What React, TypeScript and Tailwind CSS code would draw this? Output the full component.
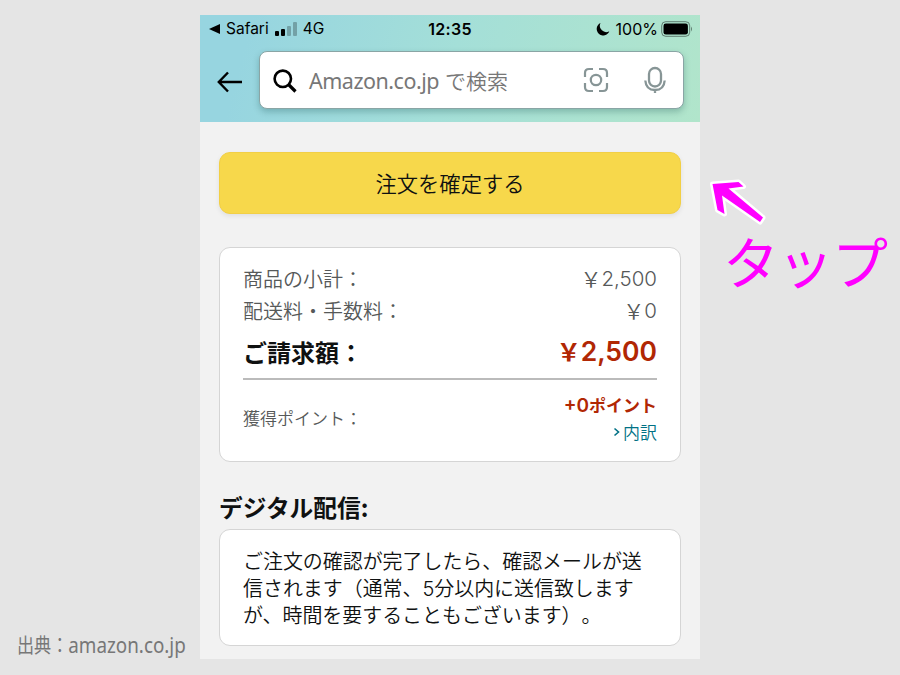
import type { ReactNode } from "react"

interface PriceRowProps {
  label: string
  amount: string
}

const PriceRow = ({ label, amount }: PriceRowProps) => (
  <div className="flex h-8 items-center justify-between text-[20px] font-[350] text-[#565959]">
    <span>{label}</span>
    <span className="flex items-center">
      <span className="text-[21px]">￥</span>
      <span className="font-['Inter'] text-[20.5px] font-[350]">{amount}</span>
    </span>
  </div>
)

const Card = ({ className, children }: { className: string; children: ReactNode }) => (
  <section className={`rounded-[11px] border border-[#d5d5d5] bg-white px-[23px] ${className}`}>
    {children}
  </section>
)

const StatusBar = () => (
  <div className="grid h-[28px] grid-cols-3 items-center px-2 font-['Inter'] text-[16px] text-black">
    <div className="flex items-center">
      <svg width="12" height="12" viewBox="0 0 12 12">
        <path d="M1 6L12 1V11Z" />
      </svg>
      <span className="ml-[6px] text-[15.5px]">Safari</span>
      <svg className="ml-[6px]" width="23" height="14" viewBox="0 0 23 14">
        <rect x="0" y="9" width="4" height="5" rx="1" />
        <rect x="6" y="7" width="4" height="7" rx="1" />
        <rect x="12" y="4" width="4" height="10" rx="1" opacity=".25" />
        <rect x="18" y="0" width="4" height="14" rx="1" opacity=".25" />
      </svg>
      <span className="ml-[5px] text-[15.5px]">4G</span>
    </div>
    <div className="text-center font-semibold tracking-[0.3px]">12:35</div>
    <div className="-mr-[1px] flex items-center justify-end">
      <svg width="14" height="14" viewBox="0 0 14 14">
        <path d="M4.5 1A6.5 6.5 0 1 0 13.3 9.2A6.3 6.3 0 0 1 4.5 1Z" />
      </svg>
      <span className="ml-[6px]">100%</span>
      <svg className="ml-[3px]" width="32" height="16" viewBox="0 0 32 16">
        <rect x=".7" y=".7" width="28" height="14.6" rx="4" fill="none" stroke="#000" strokeOpacity=".45" />
        <rect x="2.5" y="2.5" width="24.4" height="11" rx="2.3" />
        <path d="M30 5.5Q32 8 30 10.5Z" opacity=".45" />
      </svg>
    </div>
  </div>
)

const SearchHeader = () => (
  <div className="flex items-center pt-[8px] pr-[16px] pl-[17px]">
    <svg className="mt-[3px]" width="26" height="22" viewBox="0 0 26 22" fill="none" stroke="#000" strokeWidth="2.4">
      <path d="M25 11H1.8M11 1.5L1.8 11L11 20.5" />
    </svg>
    <div className="ml-4 flex h-[58px] flex-1 items-center rounded-lg border border-[#8aa5a5] bg-white pr-[17px] pl-[13px] shadow-[0_3px_6px_rgba(0,60,60,0.25)]">
      <svg className="mt-[2px]" width="24" height="24" viewBox="0 0 24 24" fill="none" stroke="#000" strokeWidth="2.6">
        <circle cx="9.8" cy="9.8" r="8.2" />
        <path d="M15.5 15.5L22.5 22.5" strokeWidth="3.2" />
      </svg>
      <span className="mt-[3px] ml-[12px] flex-1 whitespace-nowrap text-[21px] font-[350] text-[#777]">
        <span className="mr-[6px] font-['Noto_Sans'] text-[21.5px] font-normal tracking-[-0.5px]">Amazon.co.jp</span>
        で検索
      </span>
      <svg width="26" height="26" viewBox="0 0 26 26" fill="none" stroke="#879596" strokeWidth="2.2">
        <path d="M10 2H6Q2 2 2 6V10M16 2H20Q24 2 24 6V10M2 16V20Q2 24 6 24H10M24 16V20Q24 24 20 24H16" />
        <circle cx="13" cy="13" r="5.2" />
      </svg>
      <svg className="ml-[35px]" width="22" height="28" viewBox="0 0 22 28" fill="none" stroke="#879596" strokeWidth="2.3">
        <rect x="5" y="2" width="12" height="18.500" rx="6" />
        <path d="M1.3 14.5Q2 24 11 24Q20 24 20.7 14.5M11 24V27" />
      </svg>
    </div>
  </div>
)

export default function App() {
  return (
    <div className="grid h-[675px] w-[900px] grid-cols-[200px_500px_200px] overflow-hidden bg-[#e5e5e5] font-['Noto_Sans_CJK_JP',sans-serif]">
      <aside className="flex items-end pb-[15px] pl-[17px]">
        <p className="origin-left scale-x-[0.855] whitespace-nowrap text-[20px] leading-[30px] text-[#777]">
          出典：<span className="font-['Noto_Sans'] text-[22px]">amazon.co.jp</span>
        </p>
      </aside>

      <main className="mt-[15px] h-[644px] bg-[#f2f2f2]">
        <header className="h-[107px] bg-linear-[105deg] from-[#97d5e0] from-10% via-[#a4dfd8] via-50% to-[#b1e5cb]">
          <StatusBar />
          <SearchHeader />
        </header>

        <div className="px-[19px] pt-[30px]">
          <button className="block h-[62px] w-full rounded-[11px] border border-[#f2cf45] bg-[#f7d84b] pb-[1px] text-[21.3px] font-[350] text-[#0f1111] shadow-[0_2px_5px_rgba(0,0,0,0.08)]">
            注文を確定する
          </button>

          <Card className="mt-[33px] h-[215px] pt-[15px]">
            <PriceRow label="商品の小計：" amount="2,500" />
            <PriceRow label="配送料・手数料：" amount="0" />
            <div className="flex h-[53px] items-center justify-between border-b-2 border-[#bbb] pb-[2px] text-2xl font-bold">
              <span className="text-[#0f1111]">ご請求額：</span>
              <span className="flex items-center text-[#b12704]">
                <span>￥</span>
                <span className="font-['Inter'] text-[26.5px] font-semibold">2,500</span>
              </span>
            </div>
            <div className="flex h-[76px] items-center justify-between text-[17px]">
              <span className="font-[350] text-[#565959]">獲得ポイント：</span>
              <div className="flex flex-col items-end leading-[27px]">
                <span className="font-bold text-[#b12704]">
                  <span className="font-['Inter'] text-[19px] leading-none font-semibold">+0</span>ポイント
                </span>
                <span className="flex items-center font-[350] text-[#007185]">
                  <svg className="mr-[3px]" width="7" height="10" viewBox="0 0 7 10" fill="none" stroke="#007185" strokeWidth="1.6">
                    <path d="M1.5 1.5L5.5 5L1.5 8.5" />
                  </svg>
                  内訳
                </span>
              </div>
            </div>
          </Card>

          <h2 className="mt-[27px] h-[40px] text-[23.7px] leading-[36px] font-bold text-[#0f1111]">デジタル配信:</h2>

          <Card className="h-[117px] pt-[17px]">
            <p className="text-[19.95px] leading-[27px] font-[350] whitespace-nowrap text-[#0f1111] [text-spacing-trim:space-all]">
              ご注文の確認が完了したら、確認メールが送
              <br />
              信されます（通常、<span className="font-['Inter'] leading-none font-light">5</span>分以内に送信致します
              <br />
              が、時間を要することもございます）。
            </p>
          </Card>
        </div>
      </main>

      <aside className="pt-[177px] pl-[9px]">
        <svg width="60" height="50" viewBox="0 0 60 50">
          <path
            d="M3.5 7L29.500 5L34.500 9.500L19.500 11.500L54 40.500L51 45L13 18.500L15.500 37L8.500 33Z"
            fill="#f0f"
            stroke="#fff"
            strokeWidth="5"
            strokeLinejoin="round"
            paintOrder="stroke"
          />
        </svg>
        <p className="-mt-[2px] ml-[14px] text-[56px] leading-[70px] tracking-[-1.5px] whitespace-nowrap text-[#f0f]">タップ</p>
      </aside>
    </div>
  )
}
